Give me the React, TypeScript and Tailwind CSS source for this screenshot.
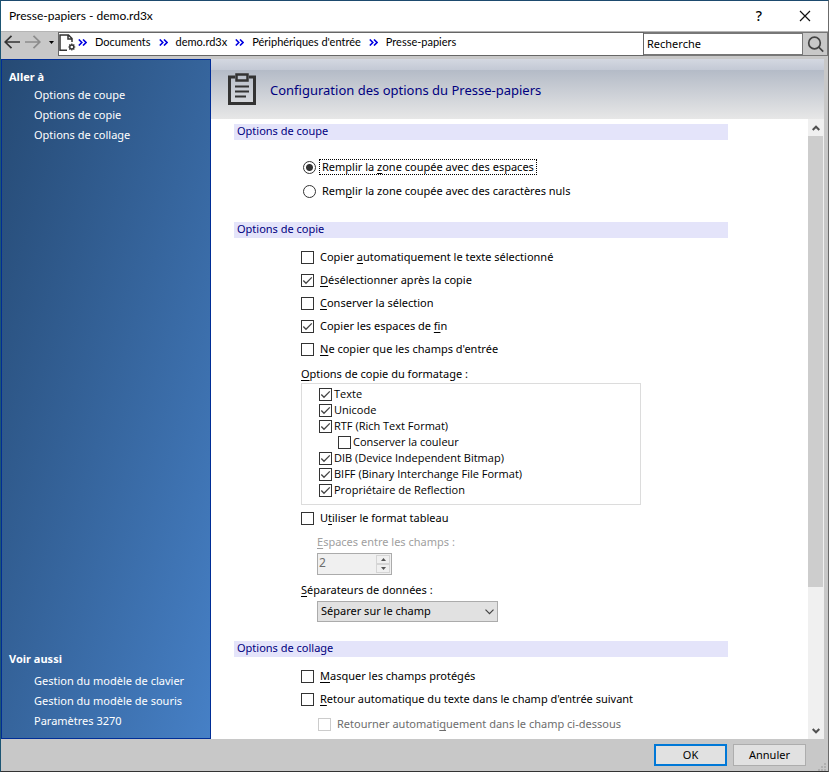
import { Fragment, ReactNode } from "react";

const goTo = ["Options de coupe", "Options de copie", "Options de collage"];

const seeAlso = [
  "Gestion du modèle de clavier",
  "Gestion du modèle de souris",
  "Paramètres 3270",
];

const crumbs = ["Documents", "demo.rd3x", "Périphériques d'entrée", "Presse-papiers"];

const formats = [
  { label: "Texte", checked: true },
  { label: "Unicode", checked: true },
  { label: "RTF (Rich Text Format)", checked: true },
  { label: "Conserver la couleur", checked: false, nested: true },
  { label: "DIB (Device Independent Bitmap)", checked: true },
  { label: "BIFF (Binary Interchange File Format)", checked: true },
  { label: "Propriétaire de Reflection", checked: true },
];

// "&" marks the letter that is the keyboard shortcut
const Mnemonic = ({ text }: { text: string }) => {
  const at = text.indexOf("&");
  if (at < 0) return <>{text}</>;
  return (
    <>
      {text.slice(0, at)}
      <span className="underline underline-offset-2">{text[at + 1]}</span>
      {text.slice(at + 2)}
    </>
  );
};

interface CheckboxProps {
  label: string;
  checked?: boolean;
  disabled?: boolean;
  compact?: boolean;
}

const Checkbox = ({ label, checked, disabled, compact }: CheckboxProps) => (
  <label
    className={`flex w-fit items-center ${
      compact ? "h-4 gap-0.5 font-['Open_Sans',sans-serif]" : "h-[23px] gap-1.5"
    } ${disabled ? "text-[#6d6d6d]" : ""}`}
  >
    <span className="grid size-[13px] shrink-0">
      <input
        type="checkbox"
        defaultChecked={checked}
        disabled={disabled}
        className="peer size-[13px] appearance-none border border-[#333] bg-white [grid-area:1/1] disabled:border-[#ccc]"
      />
      <svg
        viewBox="0 0 13 13"
        className="pointer-events-none invisible size-[13px] [grid-area:1/1] peer-checked:visible"
        fill="none"
        stroke="#444"
        strokeWidth="1.3"
      >
        <path d="M2.3 6.5 5 9.3 10.8 3.4" />
      </svg>
    </span>
    <span className="whitespace-nowrap">
      <Mnemonic text={label} />
    </span>
  </label>
);

const Radio = ({ label, checked }: { label: string; checked?: boolean }) => (
  <label className="flex h-6 w-fit items-center gap-[3px]">
    <input
      type="radio"
      name="cut"
      defaultChecked={checked}
      className="size-[13px] shrink-0 appearance-none rounded-full border border-[#333] bg-white checked:bg-[radial-gradient(circle,#333_0_3px,#fff_4px)]"
    />
    <span
      className={`border border-dotted px-0.5 leading-[14px] whitespace-nowrap ${
        checked ? "border-black" : "border-transparent"
      }`}
    >
      <Mnemonic text={label} />
    </span>
  </label>
);

const SectionTitle = ({ children }: { children: ReactNode }) => (
  <h2 className="h-4 bg-[#e4e4fa] pl-[3px] leading-[14px] text-[#00007f]">{children}</h2>
);

const SideLinks = ({ title, items, gap }: { title: string; items: string[]; gap?: boolean }) => (
  <nav>
    <h2 className={`text-[11px] leading-4 font-bold ${gap ? "mb-1" : ""}`}>{title}</h2>
    <ul className="pl-[25px]">
      {items.map((item) => (
        <li key={item} className="h-5 leading-5">
          <a href="#">{item}</a>
        </li>
      ))}
    </ul>
  </nav>
);

const TitleBar = () => (
  <header className="flex h-[30px] shrink-0 items-center bg-white pl-2">
    <h1 className="font-['Lato',sans-serif] text-xs">Presse-papiers - demo.rd3x</h1>
    <button aria-label="Aide" className="mr-8 ml-auto w-4 text-sm font-medium">
      ?
    </button>
    <button aria-label="Fermer" className="mr-[17px]">
      <svg viewBox="0 0 12 12" className="size-3" stroke="#111" strokeWidth="1.2">
        <path d="M1 1 11 11M11 1 1 11" />
      </svg>
    </button>
  </header>
);

const Toolbar = () => (
  <div className="flex h-7 shrink-0 border-t border-[#b5b5b5] pb-[3px]">
    <div className="flex w-[57px] shrink-0 items-center pb-1 pl-[3px]">
      <button aria-label="Précédent">
        <svg viewBox="0 0 16 14" className="h-3.5 w-4" fill="none" stroke="#333" strokeWidth="1.7">
          <path d="M16 7H1M7.5 .8 1.2 7l6.3 6.2" />
        </svg>
      </button>
      <button aria-label="Suivant" className="ml-[5px]">
        <svg viewBox="0 0 16 14" className="h-3.5 w-4" fill="none" stroke="#8c8c8c" strokeWidth="1.7">
          <path d="M0 7h15M8.5 .8 14.8 7l-6.3 6.2" />
        </svg>
      </button>
      <button aria-label="Historique" className="ml-2">
        <svg viewBox="0 0 5 3" className="h-[3px] w-[5px]">
          <path d="M0 0h5L2.5 3z" />
        </svg>
      </button>
    </div>
    <div className="flex min-w-0 flex-1 items-center overflow-hidden border border-[#666] bg-white pb-[3px]">
      <svg viewBox="0 0 17 18" className="h-[18px] w-[17px] shrink-0" fill="none" stroke="#333" strokeWidth="1.5">
        <path d="M8 16.2H1V1h8.5L13 4.5V8M9 1v4h4" />
        <circle cx="12.8" cy="13" r="2" strokeWidth="1.4" />
        <path
          d="M12.8 9.5v1.5M12.8 15v1.5M9.3 13h1.5M14.8 13h1.5M10.3 10.5l1 1M14.3 14.500l1 1M15.3 10.5l-1 1M11.3 14.5l-1 1"
          strokeWidth="1.2"
        />
      </svg>
      {crumbs.map((crumb, i) => (
        <Fragment key={crumb}>
          <svg
            viewBox="0 0 9 7"
            className={`mr-2 h-[7px] w-[9px] shrink-0 ${i === 0 ? "ml-0.5" : "ml-2"}`}
            fill="none"
            stroke="#0000e0"
            strokeWidth="1.6"
          >
            <path d="M.8 .5 3.8 3.5l-3 3M5 .5l3 3-3 3" />
          </svg>
          <a href="#" className="font-['Lato',sans-serif] text-[11px] whitespace-nowrap">
            {crumb}
          </a>
        </Fragment>
      ))}
    </div>
    <input
      type="text"
      aria-label="Recherche"
      defaultValue="Recherche"
      className="w-[159px] shrink-0 border-y-2 border-r border-[#777] bg-white px-[3px] text-[11px] outline-none"
    />
    <button
      aria-label="Rechercher"
      className="flex w-[25px] shrink-0 items-center justify-center border border-l-0 border-[#777]"
    >
      <svg viewBox="0 0 17 17" className="size-[17px]" fill="none" stroke="#444" strokeWidth="1.7">
        <circle cx="7.5" cy="7" r="5.8" />
        <path d="m11.7 11.2 4.5 4.5" />
      </svg>
    </button>
  </div>
);

const Banner = () => (
  <div className="flex h-[60px] shrink-0 items-center bg-[linear-gradient(#d4d8e1,#c3c9d5_11px,#b4bbc7_11px,#e7e7e7)] pl-[17px]">
    <svg viewBox="0 0 28 32" className="h-8 w-7" fill="none" stroke="#333">
      <path d="M7 4H1.5v26.5h25V4H21" strokeWidth="3" />
      <path d="M8.5 1.5h11v6h-11z" strokeWidth="2.5" />
      <path d="M7 13.5h14M7 18.5h14M7 23.5h11" strokeWidth="2.2" />
    </svg>
    <p className="ml-3.5 pt-1 text-[13px] text-[#00007f]">Configuration des options du Presse-papiers</p>
  </div>
);

const Scrollbar = () => (
  <div className="flex w-4 shrink-0 flex-col bg-[#f0f0f0]">
    <button aria-label="Monter" className="flex h-[17px] items-center justify-center">
      <svg viewBox="0 0 8 6" className="h-1.5 w-2" fill="none" stroke="#505050" strokeWidth="2">
        <path d="M.7 5 4 1.7 7.3 5" />
      </svg>
    </button>
    <div className="min-h-0 flex-1">
      <div className="mr-px h-[77%] bg-[#cdcdcd]" />
    </div>
    <button aria-label="Descendre" className="flex h-[17px] items-center justify-center">
      <svg viewBox="0 0 8 6" className="h-1.5 w-2" fill="none" stroke="#505050" strokeWidth="2">
        <path d="M.7 1 4 4.3 7.3 1" />
      </svg>
    </button>
  </div>
);

const Spinner = () => (
  <div className="flex h-[22px] w-[75px] border border-[#ababab] bg-[#f0f0f0] p-px">
    <input
      id="spaces"
      type="text"
      defaultValue="2"
      disabled
      className="min-w-0 flex-1 pb-0.5 text-xs leading-4 text-[#6d6d6d]"
    />
    <div className="flex w-3.5 flex-col">
      {["M0 3h5L2.5 0z", "M0 0h5L2.5 3z"].map((d, i) => (
        <button
          key={d}
          disabled
          aria-label={i === 0 ? "Augmenter" : "Diminuer"}
          className="flex flex-1 items-center justify-center border border-[#d5d5d5]"
        >
          <svg viewBox="0 0 5 3" className="h-[3px] w-[5px]" fill="#555">
            <path d={d} />
          </svg>
        </button>
      ))}
    </div>
  </div>
);

export default function App() {
  return (
    <div className="flex h-screen min-h-[640px] flex-col border border-t-[#1d4a6e] border-r-[#6b6b6b] border-b-[#333] border-l-[#1d5573] bg-[#c8c8c8] font-['Noto_Sans','Open_Sans',sans-serif] text-[11px] text-black">
      <TitleBar />
      <Toolbar />
      <div className="flex min-h-0 flex-1 pr-1">
        <aside className="flex w-[210px] shrink-0 flex-col justify-between border border-[#002d96] bg-linear-to-br from-[#264a74] to-[#4680c6] pt-[9px] pb-[7px] pl-[7px] text-white">
          <SideLinks title="Aller à" items={goTo} />
          <SideLinks title="Voir aussi" items={seeAlso} gap />
        </aside>
        <div className="flex min-w-0 flex-1 flex-col">
          <Banner />
          <div className="flex min-h-0 flex-1 bg-white">
            <main className="min-w-0 flex-1 overflow-hidden pt-[5px] pr-20 pl-[23px]">
              <section>
                <SectionTitle>Options de coupe</SectionTitle>
                <div className="mt-[15px] pl-[69px]">
                  <Radio label="Remplir la &zone coupée avec des espaces" checked />
                  <Radio label="Rem&plir la zone coupée avec des caractères nuls" />
                </div>
              </section>

              <section className="mt-[19px]">
                <SectionTitle>Options de copie</SectionTitle>
                <div className="mt-2 pl-[67px]">
                  <Checkbox label="Copier &automatiquement le texte sélectionné" />
                  <Checkbox label="&Désélectionner après la copie" checked />
                  <Checkbox label="&Conserver la sélection" />
                  <Checkbox label="Copier les espaces de &fin" checked />
                  <Checkbox label="&Ne copier que les champs d'entrée" />
                  <fieldset className="mt-[3px]">
                    <legend className="h-[19px] leading-[19px]">
                      <Mnemonic text="&Options de copie du formatage :" />
                    </legend>
                    <div className="h-[122px] max-w-[340px] border border-[#dcdcdc] pt-0.5 pl-[17px]">
                      {formats.map((f) => (
                        <div key={f.label} className={f.nested ? "pl-[19px]" : ""}>
                          <Checkbox label={f.label} checked={f.checked} compact />
                        </div>
                      ))}
                    </div>
                  </fieldset>
                  <div className="mt-0.5">
                    <Checkbox label="U&tiliser le format tableau" />
                  </div>
                  <div className="mt-0.5 pl-4">
                    <label htmlFor="spaces" className="block h-[21px] leading-5 text-[#a0a0a0]">
                      <Mnemonic text="&Espaces entre les champs :" />
                    </label>
                    <Spinner />
                  </div>
                  <label htmlFor="separators" className="mt-[5px] block h-5 leading-5">
                    <Mnemonic text="&Séparateurs de données :" />
                  </label>
                  <div className="mt-px ml-4 grid w-[181px] items-center">
                    <select
                      id="separators"
                      className="h-[21px] appearance-none border border-[#ababab] bg-[#e1e1e1] pl-[3px] [grid-area:1/1]"
                    >
                      <option>Séparer sur le champ</option>
                    </select>
                    <svg
                      viewBox="0 0 9 6"
                      className="pointer-events-none mr-1 h-1.5 w-[9px] justify-self-end [grid-area:1/1]"
                      fill="none"
                      stroke="#444"
                      strokeWidth="1.2"
                    >
                      <path d="M.5 .7 4.5 4.7 8.5 .7" />
                    </svg>
                  </div>
                </div>
              </section>

              <section className="mt-[19px]">
                <SectionTitle>Options de collage</SectionTitle>
                <div className="mt-2 pl-[67px]">
                  <Checkbox label="&Masquer les champs protégés" />
                  <Checkbox label="&Retour automatique du texte dans le champ d'entrée suivant" />
                  <div className="mt-0.5 pl-[17px]">
                    <Checkbox label="Retourner automati&quement dans le champ ci-dessous" disabled />
                  </div>
                </div>
              </section>
            </main>
            <Scrollbar />
          </div>
        </div>
      </div>
      <footer className="flex h-8 shrink-0 items-center justify-end gap-1.5 pr-0.5">
        <button className="h-[22px] w-[73px] border-2 border-[#0078d7] bg-[#e1e1e1]">OK</button>
        <button className="h-[22px] w-[73px] border border-[#adadad] bg-[#e1e1e1]">Annuler</button>
        <svg viewBox="0 0 8 8" className="ml-1.5 size-2 self-end" fill="#b0b0b0">
          <path d="M6 0h2v2H6zM3 3h2v2H3zM6 3h2v2H6zM0 6h2v2H0zM3 6h2v2H3zM6 6h2v2H6z" />
        </svg>
      </footer>
    </div>
  );
}
